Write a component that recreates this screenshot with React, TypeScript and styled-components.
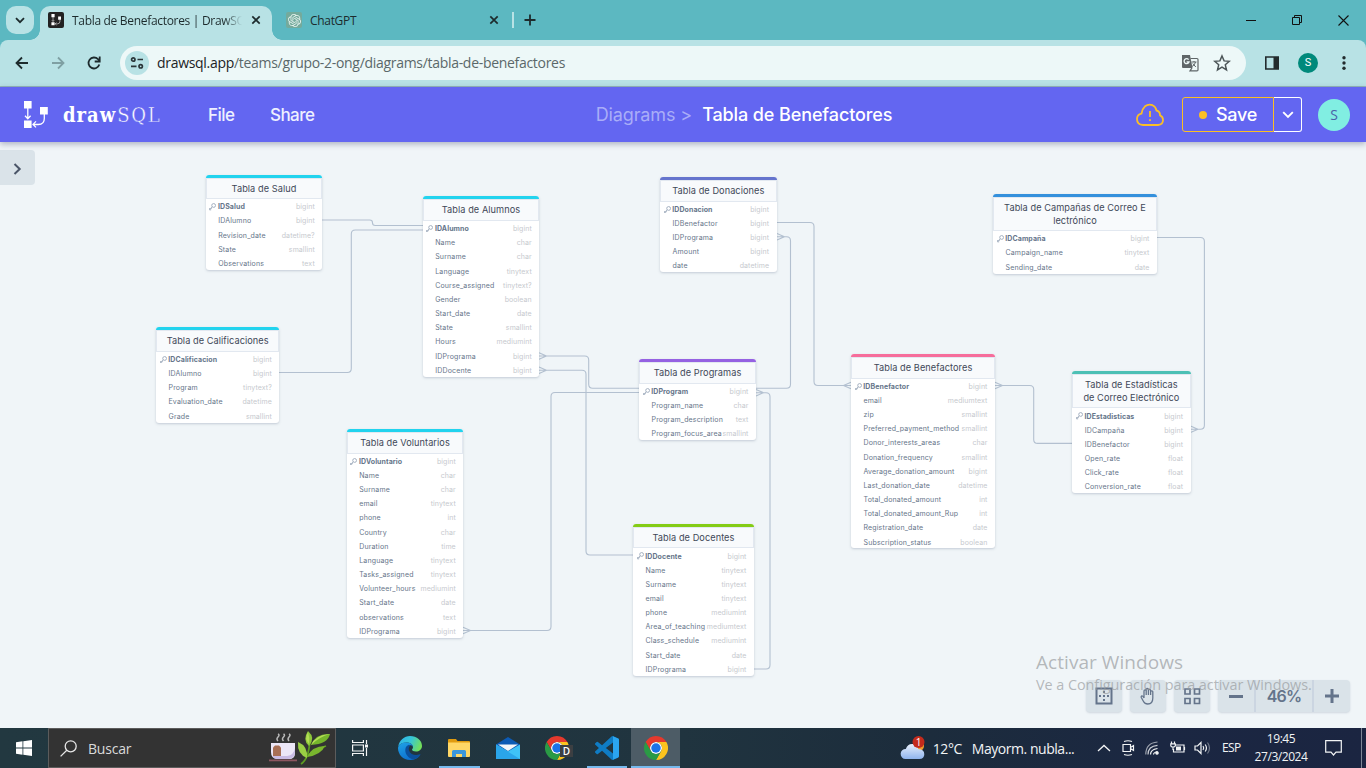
import React from "react";
import styled, { createGlobalStyle } from "styled-components";
import { SiOpenai } from "react-icons/si";

const UI = `"Open Sans", "Noto Sans", sans-serif`;
const APP = `Inter, "Liberation Sans", sans-serif`;

const Global = createGlobalStyle`
  * { box-sizing: border-box; }
  body { margin: 0; overflow: hidden; font-family: ${APP}; }
  svg { display: block; flex: none; }
`;

const Screen = styled.div`
  width: 1366px;
  height: 768px;
  display: flex;
  flex-direction: column;
  overflow: hidden;
  background: #5cb8c1;
`;

/* ---------- browser chrome ---------- */

const TabStrip = styled.div`
  height: 40px;
  flex: none;
  display: flex;
  padding-left: 6px;
  font: 12px ${UI};
  color: #1d2b2d;
`;

const TabSearch = styled.div`
  width: 28px;
  height: 28px;
  margin: 6px 6px 0 0;
  border-radius: 10px;
  background: #b8e2e5;
  display: grid;
  place-items: center;
`;

const Tab = styled.div<{ $active?: boolean; $width: number }>`
  position: relative;
  width: ${(p) => p.$width}px;
  height: 34px;
  margin-top: 6px;
  padding: 0 11px 6px ${(p) => (p.$active ? 8 : 14)}px;
  display: flex;
  align-items: center;
  border-radius: 10px 10px 0 0;
  background: ${(p) => (p.$active ? "#b8e2e5" : "transparent")};
  &::before,
  &::after {
    content: "";
    display: ${(p) => (p.$active ? "block" : "none")};
    position: absolute;
    bottom: 0;
    width: 10px;
    height: 10px;
  }
  &::before {
    left: -10px;
    background: radial-gradient(circle at 0 0, transparent 9.5px, #b8e2e5 10px);
  }
  &::after {
    right: -10px;
    background: radial-gradient(circle at 100% 0, transparent 9.5px, #b8e2e5 10px);
  }
`;

const TabTitle = styled.span<{ $fade?: boolean }>`
  flex: 1;
  margin: 0 9px 0 8px;
  overflow: hidden;
  white-space: nowrap;
  letter-spacing: -0.31px;
  mask-image: ${(p) =>
    p.$fade ? "linear-gradient(90deg, #000 calc(100% - 18px), transparent)" : "none"};
`;

const Favicon = styled.span<{ $bg: string }>`
  width: 16px;
  height: 16px;
  border-radius: 2px;
  background: ${(p) => p.$bg};
  display: grid;
  place-items: center;
  color: #e6f2ee;
`;

const StripDivider = styled.span`
  width: 2px;
  height: 16px;
  margin: 12px 10px 0 2px;
  background: #b8e2e5;
`;

const PlusSlot = styled.span`
  padding-top: 14px;
`;

const WindowButtons = styled.div`
  margin-left: auto;
  display: flex;
  div {
    width: 46px;
    height: 40px;
    display: grid;
    place-items: center;
  }
`;

const Toolbar = styled.div`
  height: 47px;
  flex: none;
  display: flex;
  align-items: center;
  padding: 0 14px 1px 14px;
  background: #b8e2e5;
  border-bottom: 1px solid #93b7ba;
  border-radius: 8px 8px 0 0;
`;

const NavIcons = styled.div`
  display: flex;
  gap: 20px;
  margin-right: 18px;
`;

const Omnibox = styled.div`
  width: 1126px;
  height: 34px;
  border-radius: 17px;
  background: #edf8f8;
  display: flex;
  align-items: center;
  padding: 0 15px 0 5px;
  font: 14px ${UI};
  letter-spacing: -0.3px;
  color: #5b686a;
  b {
    font-weight: 400;
    color: #1b2325;
  }
`;

const SiteInfo = styled.span`
  width: 24px;
  height: 24px;
  margin-right: 8px;
  border-radius: 50%;
  background: #b8e2e5;
  display: grid;
  place-items: center;
`;

const OmniIcons = styled.span`
  margin-left: auto;
  display: flex;
  align-items: center;
  gap: 14px;
`;

const ToolbarEnd = styled.div`
  display: flex;
  align-items: center;
  margin-left: 18px;
  gap: 18px;
`;

const Profile = styled.span`
  width: 20px;
  height: 20px;
  border-radius: 50%;
  background: #00897b;
  color: #fff;
  font: 11px/20px Roboto, sans-serif;
  text-align: center;
`;

/* ---------- application header ---------- */

const AppHeader = styled.header`
  position: relative;
  z-index: 2;
  height: 55px;
  flex: none;
  display: flex;
  align-items: center;
  padding: 0 16px 0 23px;
  background: #6366f1;
  color: #fff;
  font-size: 18px;
  box-shadow: 0 2px 6px rgba(40, 50, 90, 0.35);
`;

const Brand = styled.div`
  display: flex;
  align-items: center;
  width: 185px;
  gap: 15px;
`;

const Wordmark = styled.div`
  display: flex;
  gap: 1px;
  padding-top: 1px;
  font: 20px/24px "DejaVu Serif Condensed", "DejaVu Serif", serif;
  b {
    letter-spacing: 1px;
  }
  span {
    letter-spacing: 1.7px;
    -webkit-text-stroke: 0.4px #6366f1;
  }
`;

const MenuItem = styled.span`
  width: 62px;
  font-size: 17px;
  font-weight: 500;
  letter-spacing: -0.55px;
  padding-top: 1px;
  color: #eef0ff;
`;

const Crumbs = styled.div`
  flex: 1;
  text-align: center;
  white-space: pre;
  padding-left: 20px;
  font-weight: 500;
  letter-spacing: -0.11px;
  i {
    font-style: normal;
    font-weight: 400;
    color: #a9adf8;
    margin-right: 10px;
  }
`;

const SaveGroup = styled.div`
  display: flex;
  height: 35px;
  margin: 0 16px 0 18px;
`;

const SaveButton = styled.div`
  width: 92px;
  padding: 0 16px 1px;
  display: flex;
  align-items: center;
  justify-content: space-between;
  border: 1px solid #fbbf24;
  border-radius: 3px 0 0 3px;
  font-weight: 500;
  font-size: 18px;
  letter-spacing: -0.3px;
  &::before {
    content: "";
    width: 8px;
    height: 8px;
    margin-top: 2px;
    border-radius: 50%;
    background: #fbbf24;
  }
`;

const SaveMore = styled.div`
  width: 28px;
  border: 1px solid #fff;
  border-left: 0;
  border-radius: 0 3px 3px 0;
  display: grid;
  place-items: center;
`;

const Avatar = styled.div`
  width: 32px;
  height: 32px;
  border-radius: 50%;
  background: #81eee2;
  color: #4a62a8;
  font: 14px/32px ${UI};
  text-align: center;
`;

/* ---------- diagram ---------- */

const Canvas = styled.main`
  position: relative;
  flex: 1;
  background: #f0f5f8;
`;

const Links = styled.svg`
  position: absolute;
  inset: 0;
  fill: none;
  stroke: #b3c0d0;
  stroke-width: 1.1;
`;

const PanelToggle = styled.div`
  position: absolute;
  left: 0;
  top: 8px;
  width: 35px;
  height: 35px;
  border-radius: 0 4px 4px 0;
  background: #dae3e9;
  display: grid;
  place-items: center;
  padding-top: 3px;
`;

const TableCard = styled.section<{ $x: number; $y: number; $w: number }>`
  position: absolute;
  left: ${(p) => p.$x}px;
  top: ${(p) => p.$y - 142}px;
  width: ${(p) => p.$w}px;
  border-radius: 3px;
  background: #fff;
  box-shadow: 0 1px 2.5px rgba(60, 80, 110, 0.25);
`;

const TableHead = styled.h2<{ $color: string }>`
  margin: 0;
  padding: 4.1px 9px 4.5px;
  border-top: 3.3px solid ${(p) => p.$color};
  border-radius: 3px 3px 0 0;
  background: #f8fafc;
  box-shadow: inset 0 0 0 1px #e2e8f0;
  color: #3f4858;
  font-size: 9.2px;
  line-height: 13px;
  font-weight: 400;
  letter-spacing: 0.06px;
  text-align: center;
  white-space: pre-line;
`;

const Column = styled.div<{ $key?: boolean }>`
  height: 14.17px;
  display: flex;
  align-items: center;
  padding: 1.3px 7.5px 0 3.5px;
  font-size: 7px;
  line-height: 13px;
  letter-spacing: ${(p) => (p.$key ? 0.08 : 0.16)}px;
  white-space: nowrap;
  color: #66758a;
  font-weight: ${(p) => (p.$key ? 700 : 400)};
  svg {
    margin-right: 1.8px;
  }
`;

const ColumnName = styled.span<{ $key?: boolean }>`
  flex: 1;
  margin-left: ${(p) => (p.$key ? 0 : 9)}px;
`;

const ColumnType = styled.span`
  font-weight: 400;
  letter-spacing: 0.08px;
  color: #c6c9ce;
`;

const Controls = styled.div`
  position: absolute;
  right: 16px;
  bottom: 16px;
  display: flex;
  gap: 8px;
`;

const ControlBox = styled.div`
  height: 32px;
  display: flex;
  border-radius: 4px;
  background: #dae3e9;
  box-shadow: 0 1px 2px rgba(60, 80, 110, 0.18);
  color: #64748b;
  font: 600 16px/32px ${APP};
  letter-spacing: -0.8px;
`;

const ControlCell = styled.div<{ $w: number; $line?: boolean }>`
  width: ${(p) => p.$w}px;
  display: grid;
  place-items: center;
  border-right: ${(p) => (p.$line ? "2px solid #cbd5e1" : "0")};
`;

const Watermark = styled.div`
  position: absolute;
  left: 1036px;
  top: 507px;
  font-family: ${UI};
  color: rgba(150, 153, 156, 0.68);
  white-space: nowrap;
  div {
    font-size: 19px;
    line-height: 26px;
    letter-spacing: 0.05px;
  }
  p {
    margin: 0;
    font-size: 14.4px;
    line-height: 20px;
    letter-spacing: -0.04px;
  }
`;

/* ---------- taskbar ---------- */

const Taskbar = styled.footer`
  height: 40px;
  flex: none;
  display: flex;
  background: linear-gradient(90deg, #223840 0%, #20343f 50%, #1c2c3c 68%, #1b2742 85%, #1b2541 100%);
  color: #f2f4f5;
  font: 14px ${UI};
  letter-spacing: -0.2px;
`;

const StartSlot = styled.div`
  width: 48px;
  display: grid;
  place-items: center;
`;

const SearchBox = styled.div`
  width: 288px;
  border: 1px solid #5c5c5c;
  background: #333;
  display: flex;
  align-items: center;
  padding: 0 4px 0 11px;
  color: #dadada;
  span {
    flex: 1;
    margin-left: 11px;
  }
`;

const TaskSlot = styled.div<{ $open?: boolean; $active?: boolean }>`
  width: 49.2px;
  height: 40px;
  display: grid;
  place-items: center;
  position: relative;
  background: ${(p) => (p.$active ? "#4d5c66" : "transparent")};
  &::after {
    content: "";
    position: absolute;
    bottom: 0;
    left: ${(p) => (p.$active ? 0 : 5)}px;
    right: ${(p) => (p.$active ? 0 : 4)}px;
    height: 2px;
    background: ${(p) => (p.$open ? "#76b9ed" : "transparent")};
  }
`;

const Weather = styled.div`
  display: flex;
  align-items: center;
  margin-left: auto;
  width: 197px;
  gap: 8px;
  letter-spacing: -0.46px;
  span + span {
    margin-left: 2px;
  }
`;

const Tray = styled.div`
  display: flex;
  align-items: center;
  gap: 8.3px;
`;

const Lang = styled.span`
  width: 20px;
  margin: 0 12px 0 11px;
  font-size: 12px;
  line-height: 40px;
  letter-spacing: -0.6px;
`;

const Clock = styled.div`
  width: 54px;
  padding-top: 2px;
  font-size: 12px;
  line-height: 18px;
  letter-spacing: -0.45px;
  text-align: center;
`;

const NoticeSlot = styled.div`
  margin: 0 19px 0 17px;
  display: grid;
  place-items: center;
`;

const DesktopEdge = styled.div`
  width: 5px;
  border-left: 1px solid #7d8796;
`;

/* ---------- icons ---------- */

const Cross = () => (
  <svg width="10" height="10" viewBox="0 0 10 10" stroke="#1d2b2d" strokeWidth="1.7">
    <path d="M1.3 1.3 8.7 8.7M8.7 1.3 1.3 8.7" />
  </svg>
);

const SchemaMark = ({ size }: { size: number }) => (
  <svg width={size} height={size * 1.08} viewBox="0 0 25 27" fill="none" stroke="#fff" strokeWidth="1.3">
    <path fill="#fff" stroke="none" d="M1 0h7.6v7.6H1zM17 6h7.8v7.6H17zM1 19.4h7.6V27H1z" />
    <path d="M4.8 7v10.5M2 14.8l2.8 2.9 2.8-2.9M21.3 13v4.5q0 6-6 6h-5M13 20.4l-3 3 3 3" />
  </svg>
);

const KeyIcon = () => (
  <svg width="7" height="7.5" viewBox="0 1 13.6 14" fill="none" stroke="#a3afbf" strokeWidth="1.9">
    <circle cx="9" cy="5.5" r="3.7" />
    <path d="M6.5 8.2 1.3 13.4M1.2 10.6v3.4h3M4.5 9.8v2.2" />
  </svg>
);

const ChromeLogo = () => (
  <svg width="24" height="24" viewBox="0 0 48 48">
    <circle cx="24" cy="24" r="12" fill="#fff" />
    <path fill="#e5392d" d="M24,12H44.7812a23.9939,23.9939,0,0,0-41.5639.0029L13.6079,30l.0093-.0024A11.9852,11.9852,0,0,1,24,12Z" />
    <path fill="#fcc31e" d="M34.3913,30.0029,24.0007,48A23.994,23.994,0,0,0,44.78,12.0031H23.9989l-.0025.0093A11.985,11.985,0,0,1,34.3913,30.0029Z" />
    <path fill="#2a9a45" d="M13.6086,30.0031,3.218,12.006A23.994,23.994,0,0,0,24.0025,48L34.3931,30.0029l-.0067-.0068a11.9852,11.9852,0,0,1-20.7778.007Z" />
    <circle cx="24" cy="24" r="9.5" fill="#1a73e8" />
  </svg>
);

const ProfileTag = styled.span`
  position: absolute;
  left: 27px;
  top: 17px;
  width: 13px;
  height: 12px;
  background: #3c3f42;
  color: #fff;
  font: 600 10px/12px ${UI};
  text-align: center;
`;

const EdgeLogo = () => (
  <svg width="24" height="24" viewBox="0 0 24 24">
    <defs>
      <linearGradient id="eg1" x1="0" y1="0.2" x2="1" y2="0.5">
        <stop offset="0" stopColor="#2fb4ea" />
        <stop offset="0.5" stopColor="#36c6d8" />
        <stop offset="1" stopColor="#74e05a" />
      </linearGradient>
      <linearGradient id="eg2" x1="0" y1="0" x2="0.5" y2="1">
        <stop offset="0" stopColor="#1fa2e6" />
        <stop offset="1" stopColor="#0d6fce" />
      </linearGradient>
    </defs>
    <path fill="url(#eg1)" d="M0.3 10.5C1.2 4.3 6.3 0 12 0C19 0 24 4.5 24 10C24 13.5 21 15.5 18 15.5C15.5 15.5 14 14.6 14 13.8C14 13.2 15 12.6 15 11C15 8.5 12 6.5 8.5 6.5C5 6.5 1.5 8 0.3 10.5Z" />
    <path fill="url(#eg2)" d="M0 12C0.5 8.5 4 6.5 8.5 6.5C12 6.5 15 8.5 15 11C14.5 9.5 12.5 9 11.5 9.5C9 10.5 8.5 13 9 15C10 19.5 14 21 18 20.5L22 19.3C20 22.3 16.5 24 12 24C5 24 0 18.5 0 12Z" />
    <path fill="#0b4f9c" d="M11 8.8C8 10 7.2 12 7.3 14.5C7.5 19 11 22.6 15.5 23.4C18.5 22.6 20.8 21 22.3 19C22.7 18.4 22.2 18 21.7 18.3C18 20 12.5 19 11 14.5C10.4 12.5 11 10.8 12 9.8Z" />
  </svg>
);

const FolderLogo = () => (
  <svg width="22" height="19" viewBox="0 0 22 19">
    <path fill="#e09b0f" d="M0 1q0-1 1-1h7l1.5 2H21q1 0 1 1v3H0z" />
    <path fill="#ffd766" d="M0 3.5h22V17q0 1-1 1H1q-1 0-1-1z" />
    <path fill="#3b97dc" d="M4 18v-5.5Q4 11 5.5 11h11q1.5 0 1.5 1.5V18h-4v-3H8v3z" />
  </svg>
);

const MailLogo = () => (
  <svg width="24" height="22" viewBox="0 0 24 22">
    <path fill="#0c5bb5" d="M0 7.5 12 0l12 7.5V22H0z" />
    <path fill="#3fc3f7" d="M24 7.5V22H0V7.5l12 7z" />
    <path fill="#2aa5ea" d="M0 7.5 24 22H0z" />
    <path fill="#f3f6f9" d="M2 7.5h20L12 14z" />
  </svg>
);

const CodeLogo = () => (
  <svg width="24" height="24" viewBox="0 0 24 24">
    <path fill="#0f7cc4" d="M23.15 2.587L18.21.21a1.494 1.494 0 0 0-1.705.29l-9.46 8.63-4.12-3.128a.999.999 0 0 0-1.276.057L.327 7.261A1 1 0 0 0 .326 8.74L3.899 12 .326 15.26a1 1 0 0 0 .001 1.479L1.65 17.94a.999.999 0 0 0 1.276.057l4.12-3.128 9.46 8.63a1.492 1.492 0 0 0 1.704.29l4.942-2.377A1.5 1.5 0 0 0 24 20.06V3.939a1.5 1.5 0 0 0-.85-1.352zm-5.146 14.861L10.826 12l7.178-5.448v10.896z" />
    <path fill="#2ba5f0" d="M18 .15l5.15 2.437A1.5 1.5 0 0 1 24 3.94v16.12a1.5 1.5 0 0 1-.85 1.353L18 23.85z" />
  </svg>
);

const TeaCup = () => (
  <svg width="28" height="30" viewBox="0 0 28 30" fill="none">
    <g stroke="#b9b9b9" strokeWidth="1.5">
      <path d="M9 8q-2-2 0-4t0-3M14.5 8q-2-2 0-4t0-3M20 8q-2-2 0-4t0-3" />
    </g>
    <path fill="#ece6f7" d="M2 10h24v10q0 6-6 6H8.5Q2 26 2 19z" />
    <path fill="#c9bbe4" d="M19 26q7 0 7-7v-4q-1 7-8 8H3.5q1.5 3 5 3z" />
    <path fill="#a86f55" d="M4 14.5l2-2h4l2 2V23H4z" />
    <path fill="#8d5660" d="M0 26.5h28v1.8H0z" />
  </svg>
);

const LeafSprig = () => (
  <svg width="34" height="34" viewBox="0 0 34 34">
    <path d="M4 33Q12 28 13 8M9 26q8-7 20-11" fill="none" stroke="#5d9c22" strokeWidth="1.8" />
    <path fill="#8cc63a" d="M11 0q8 7 1 15-7-6-1-15Z" />
    <path fill="#75b52c" d="M33 3q-2 10-19 11Q19 2 33 3Z" />
    <path fill="#9ad044" d="M1 11q10 4 9 16-10-4-9-16Z" />
    <path fill="#7ab52e" d="M28 15q-4 9-18 11 5-11 18-11Z" />
    <path fill="#b3dd55" d="M33 3Q22 6 14 14 18 4 33 3ZM11 1q2 6 1 12-5-5-1-12Z" />
  </svg>
);

/* ---------- data ---------- */

type TableDef = { title: string; x: number; y: number; w: number; color: string; cols: string };

const CYAN = "#22d3ee";

const tables: TableDef[] = [
  { title: "Tabla de Salud", x: 205.7, y: 174.5, w: 116.6, color: CYAN,
    cols: "IDSalud bigint,IDAlumno bigint,Revision_date datetime?,State smallint,Observations text" },
  { title: "Tabla de Calificaciones", x: 156, y: 327.2, w: 123.3, color: CYAN,
    cols: "IDCalificacion bigint,IDAlumno bigint,Program tinytext?,Evaluation_date datetime,Grade smallint" },
  { title: "Tabla de Alumnos", x: 422.7, y: 196.3, w: 116.6, color: CYAN,
    cols: "IDAlumno bigint,Name char,Surname char,Language tinytext,Course_assigned tinytext?,Gender boolean,Start_date date,State smallint,Hours mediumint,IDPrograma bigint,IDDocente bigint" },
  { title: "Tabla de Voluntarios", x: 346.7, y: 429, w: 116.6, color: CYAN,
    cols: "IDVoluntario bigint,Name char,Surname char,email tinytext,phone int,Country char,Duration time,Language tinytext,Tasks_assigned tinytext,Volunteer_hours mediumint,Start_date date,observations text,IDPrograma bigint" },
  { title: "Tabla de Donaciones", x: 660, y: 177, w: 116.6, color: "#6574cd",
    cols: "IDDonacion bigint,IDBenefactor bigint,IDPrograma bigint,Amount bigint,date datetime" },
  { title: "Tabla de Programas", x: 639, y: 359.2, w: 117, color: "#9561e2",
    cols: "IDProgram bigint,Program_name char,Program_description text,Program_focus_area smallint" },
  { title: "Tabla de Docentes", x: 633, y: 523.7, w: 121, color: "#84cc16",
    cols: "IDDocente bigint,Name tinytext,Surname tinytext,email tinytext,phone mediumint,Area_of_teaching mediumtext,Class_schedule mediumint,Start_date date,IDPrograma bigint" },
  { title: "Tabla de Benefactores", x: 851, y: 354, w: 144, color: "#f66d9b",
    cols: "IDBenefactor bigint,email mediumtext,zip smallint,Preferred_payment_method smallint,Donor_interests_areas char,Donation_frequency smallint,Average_donation_amount bigint,Last_donation_date datetime,Total_donated_amount int,Total_donated_amount_Rup int,Registration_date date,Subscription_status boolean" },
  { title: "Tabla de Campañas de Correo E\nlectrónico", x: 993, y: 193.5, w: 164, color: "#3490dc",
    cols: "IDCampaña bigint,Campaign_name tinytext,Sending_date date" },
  { title: "Tabla de Estadísticas\nde Correo Electrónico", x: 1072.2, y: 370.8, w: 118.4, color: "#4dc0b5",
    cols: "IDEstadisticas bigint,IDCampaña bigint,IDBenefactor bigint,Open_rate float,Click_rate float,Conversion_rate float" },
];

type Link = { from: [number, number]; mid: number; to: [number, number]; feet: [number, number, number][] };

const links: Link[] = [
  { from: [322, 220], mid: 372.5, to: [423, 225.5], feet: [] },
  { from: [279, 372.5], mid: 351.3, to: [423, 230], feet: [] },
  { from: [539, 356], mid: 588.7, to: [639, 388.3], feet: [[539, 356, 1]] },
  { from: [639, 392.5], mid: 551, to: [463, 630.5], feet: [[463, 630.5, 1]] },
  { from: [539, 370.2], mid: 586, to: [633, 555], feet: [[539, 370.2, 1]] },
  { from: [777, 222.5], mid: 814, to: [851, 385.5], feet: [[851, 385.5, -1]] },
  { from: [777, 236.7], mid: 790.5, to: [756, 388.3], feet: [[777, 236.7, 1]] },
  { from: [756, 392.7], mid: 770, to: [754, 669], feet: [[756, 392.7, 1]] },
  { from: [1157, 237.5], mid: 1204.4, to: [1190, 429.2], feet: [[1190.5, 429.2, 1]] },
  { from: [995, 385.5], mid: 1033.7, to: [1072, 443.4], feet: [[995, 385.5, 1]] },
];

const elbow = ({ from: [x1, y1], mid, to: [x2, y2] }: Link) => {
  const r = Math.min(4, Math.abs(y2 - y1) / 2);
  const a = Math.sign(mid - x1) * r;
  const v = Math.sign(y2 - y1) * r;
  const b = Math.sign(x2 - mid) * r;
  return `M${x1} ${y1}H${mid - a}Q${mid} ${y1} ${mid} ${y1 + v}V${y2 - v}Q${mid} ${y2} ${mid + b} ${y2}H${x2}`;
};

const foot = ([x, y, d]: [number, number, number]) =>
  `M${x} ${y - 3.3}L${x + 7.5 * d} ${y}L${x} ${y + 3.3}`;

const DiagramTable = ({ title, x, y, w, color, cols }: TableDef) => (
  <TableCard $x={x} $y={y} $w={w}>
    <TableHead $color={color}>{title}</TableHead>
    {cols.split(",").map((col, i) => {
      const [name, type] = col.split(" ");
      return (
        <Column key={name} $key={i === 0}>
          {i === 0 && <KeyIcon />}
          <ColumnName $key={i === 0}>{name}</ColumnName>
          <ColumnType>{type}</ColumnType>
        </Column>
      );
    })}
  </TableCard>
);

/* ---------- sections ---------- */

const Browser = () => (
  <>
    <TabStrip>
      <TabSearch>
        <svg width="10" height="7" viewBox="0 0 10 7" fill="none" stroke="#1d2b2d" strokeWidth="1.8">
          <path d="M1 1.2 5 5.2 9 1.2" />
        </svg>
      </TabSearch>
      <Tab $active $width={232}>
        <Favicon $bg="#222"><SchemaMark size={10.5} /></Favicon>
        <TabTitle $fade>Tabla de Benefactores | DrawSQL</TabTitle>
        <Cross />
      </Tab>
      <Tab $width={238}>
        <Favicon $bg="#74aa9c"><SiOpenai size={13} /></Favicon>
        <TabTitle>ChatGPT</TabTitle>
        <Cross />
      </Tab>
      <StripDivider />
      <PlusSlot>
        <svg width="12" height="12" viewBox="0 0 12 12" stroke="#1d2b2d" strokeWidth="1.8">
          <path d="M6 .5v11M.5 6h11" />
        </svg>
      </PlusSlot>
      <WindowButtons>
        <div><svg width="10" height="10" viewBox="0 0 10 10"><path d="M0 5.5h10" stroke="#111" /></svg></div>
        <div>
          <svg width="10" height="10" viewBox="0 0 10 10" fill="none" stroke="#111">
            <path d="M.5 2.5h7v7h-7zM2.5 2.5v-2h7v7h-2" />
          </svg>
        </div>
        <div><svg width="11" height="11" viewBox="0 0 11 11" stroke="#111" strokeWidth="1.1"><path d="M.5.5l10 10M10.5.5l-10 10" /></svg></div>
      </WindowButtons>
    </TabStrip>
    <Toolbar>
      <NavIcons>
        <svg width="16" height="16" viewBox="0 0 16 16" fill="none" stroke="#1d2b2d" strokeWidth="1.8"><path d="M14 8H3M8 2.5 2.5 8 8 13.5" /></svg>
        <svg width="16" height="16" viewBox="0 0 16 16" fill="none" stroke="#7fa0a3" strokeWidth="1.8"><path d="M2 8h11M8 2.5 13.5 8 8 13.5" /></svg>
        <svg width="16" height="16" viewBox="0 0 16 16" fill="none" stroke="#1d2b2d" strokeWidth="1.8">
          <path d="M13.3 9.5A5.5 5.5 0 1 1 12 4.2L13.5 5.8" />
          <path d="M13.7 1.5v5h-5" />
        </svg>
      </NavIcons>
      <Omnibox>
        <SiteInfo>
          <svg width="14" height="14" viewBox="0 0 14 14" fill="none" stroke="#2b3639" strokeWidth="1.7">
            <circle cx="3.3" cy="3.5" r="1.7" /><path d="M7.5 3.5H13M1 10.3h5.5" /><circle cx="10.7" cy="10.3" r="1.7" />
          </svg>
        </SiteInfo>
        <span><b>drawsql.app</b>/teams/grupo-2-ong/diagrams/tabla-de-benefactores</span>
        <OmniIcons>
          <svg width="18" height="18" viewBox="0 0 18 18">
            <path fill="#5f6668" d="M1 1h8l2.5 13H2q-1 0-1-1z" />
            <path fill="none" stroke="#5f6668" strokeWidth="1.2" d="M9.5 4.5H16q1 0 1 1V16q0 .8-1 .8H9l2-3" />
            <path fill="none" stroke="#edf8f8" strokeWidth="1.3" d="M7.6 5.6A2.5 2.5 0 1 0 8 8H5.6" />
            <path fill="none" stroke="#5f6668" strokeWidth="1" d="M10.5 8h5M13 7v1M14.5 8q-.5 3-3.5 4.5M11.8 9.5l3 3.5" />
          </svg>
          <svg width="18" height="18" viewBox="0 0 18 18" fill="none" stroke="#4c5558" strokeWidth="1.5">
            <path d="M9 2l2.1 4.9 5.2.4-4 3.5 1.2 5.2L9 13.2 4.5 16l1.2-5.2-4-3.5 5.2-.4z" />
          </svg>
        </OmniIcons>
      </Omnibox>
      <ToolbarEnd>
        <svg width="16" height="16" viewBox="0 0 16 16"><path fill="none" stroke="#222b2d" strokeWidth="1.6" d="M1.8 2h12.4v12H1.8z" /><path fill="#222b2d" d="M9.5 2H14v12H9.5z" /></svg>
        <Profile>S</Profile>
        <svg width="16" height="16" viewBox="0 0 16 16" fill="#222b2d"><circle cx="8" cy="2.8" r="1.7" /><circle cx="8" cy="8" r="1.7" /><circle cx="8" cy="13.2" r="1.7" /></svg>
      </ToolbarEnd>
    </Toolbar>
  </>
);

const Header = () => (
  <AppHeader>
    <Brand>
      <SchemaMark size={25} />
      <Wordmark><b>draw</b><span>SQL</span></Wordmark>
    </Brand>
    <MenuItem>File</MenuItem>
    <MenuItem>Share</MenuItem>
    <Crumbs><i>Diagrams &gt;</i>Tabla de Benefactores</Crumbs>
    <svg width="28" height="24" viewBox="0 0 28 24" fill="none" stroke="#fbbf24" strokeWidth="1.8">
      <path d="M7 22q-6-.4-6-6 0-4.6 4.5-5.4Q6 6 9 3.3 12.5.5 16.5 2.2q3.3 1.5 4 5.3 3.5.8 3.6 4.8 2.9 1.2 2.9 4.7 0 4.6-5 5z" />
      <path d="M14 8v6M14 16.2v1.8" />
    </svg>
    <SaveGroup>
      <SaveButton>Save</SaveButton>
      <SaveMore>
        <svg width="12" height="8" viewBox="0 0 12 8" fill="none" stroke="#fff" strokeWidth="1.9"><path d="M1.2 1.2 6 6l4.8-4.8" /></svg>
      </SaveMore>
    </SaveGroup>
    <Avatar>S</Avatar>
  </AppHeader>
);

const Diagram = () => (
  <Canvas>
    <Links width="1366" height="586" viewBox="0 142 1366 586">
      {links.map((l) => <path key={l.from.join()} d={elbow(l) + l.feet.map(foot).join("")} />)}
    </Links>
    {tables.map((t) => <DiagramTable key={t.title} {...t} />)}
    <PanelToggle>
      <svg width="9" height="12" viewBox="0 0 9 12" fill="none" stroke="#4a5568" strokeWidth="2"><path d="M1.5 1 6.7 6 1.5 11" /></svg>
    </PanelToggle>
    <Controls>
      <ControlBox>
        <ControlCell $w={36}>
          <svg width="18" height="18" viewBox="0 0 18 18" stroke="#64748b" strokeWidth="2" fill="none">
            <path d="M1.5 1.5h15v15h-15z" /><path strokeDasharray="2 2" d="M9 4v10M4 9h10" />
          </svg>
        </ControlCell>
      </ControlBox>
      <ControlBox>
        <ControlCell $w={36}>
          <svg width="16" height="18" viewBox="0 0 16 18" fill="none" stroke="#64748b" strokeWidth="1.3">
            <path d="M4 11V4q0-1.2 1.1-1.2T6.2 4v4M6.2 5V2.5q0-1.2 1.1-1.2t1.1 1.2V8M8.4 3.5q0-1.2 1.1-1.2t1.1 1.2V8M10.6 5q0-1.2 1.1-1.2T12.8 5v6q0 6-5 6-3 0-4.3-2.5L1.3 10.5q-.4-1.3.7-1.6 1-.2 2 2.1" />
          </svg>
        </ControlCell>
      </ControlBox>
      <ControlBox>
        <ControlCell $w={36}>
          <svg width="18" height="18" viewBox="0 0 18 18" fill="none" stroke="#64748b" strokeWidth="1.7">
            <path d="M2 2h5v5H2zM11.5 2h5v5h-5zM2 11.5h5v5H2zM11.5 11.5h5v5h-5z" />
          </svg>
        </ControlCell>
      </ControlBox>
      <ControlBox>
        <ControlCell $w={38} $line><svg width="14" height="3"><path fill="#64748b" d="M0 0h14v3H0z" /></svg></ControlCell>
        <ControlCell $w={58} $line>46%</ControlCell>
        <ControlCell $w={36}><svg width="14" height="14"><path fill="#64748b" d="M0 5.5h5.5V0h3v5.5H14v3H8.5V14h-3V8.5H0z" /></svg></ControlCell>
      </ControlBox>
    </Controls>
    <Watermark>
      <div>Activar Windows</div>
      <p>Ve a Configuración para activar Windows.</p>
    </Watermark>
  </Canvas>
);

const WindowsTaskbar = () => (
  <Taskbar>
    <StartSlot>
      <svg width="16" height="16" viewBox="0 0 16 16" fill="#fff"><path d="M0 2.3 6.5 1.3V7.6H0zM7.3 1.2 16 0v7.6H7.3zM0 8.4h6.5v6.3L0 13.7zM7.3 8.4H16V16l-8.7-1.2z" /></svg>
    </StartSlot>
    <SearchBox>
      <svg width="17" height="17" viewBox="0 0 17 17" fill="none" stroke="#e6e6e6" strokeWidth="1.3"><circle cx="10.7" cy="6.3" r="5.5" /><path d="M6.8 10.2.6 16.4" /></svg>
      <span>Buscar</span>
      <TeaCup />
      <LeafSprig />
    </SearchBox>
    <TaskSlot>
      <svg width="17" height="16" viewBox="0 0 17 16" fill="none" stroke="#f2f4f5" strokeWidth="1.2">
        <path d="M.6 0v2.5h10.8V0M.6 16v-2.5h10.8V16M.6 5h10.8v6H.6zM14.5 0v4M14.5 8v8" /><path fill="#f2f4f5" stroke="none" d="M13 4.5h3V7.5h-3z" />
      </svg>
    </TaskSlot>
    <TaskSlot><EdgeLogo /></TaskSlot>
    <TaskSlot $open><FolderLogo /></TaskSlot>
    <TaskSlot><MailLogo /></TaskSlot>
    <TaskSlot><ChromeLogo /><ProfileTag>D</ProfileTag></TaskSlot>
    <TaskSlot $open><CodeLogo /></TaskSlot>
    <TaskSlot $open $active><ChromeLogo /></TaskSlot>
    <Weather>
      <svg width="25" height="24" viewBox="0 0 25 24">
        <defs><linearGradient id="cl" x1="0" y1="0" x2="0" y2="1"><stop offset="0" stopColor="#e9f0fb" /><stop offset="1" stopColor="#8fb4ee" /></linearGradient></defs>
        <circle cx="19" cy="10" r="5" fill="#f39a2b" />
        <path fill="url(#cl)" d="M5.5 23a5 5 0 0 1 .3-10q2-5.5 7-5 4.5.5 5.5 5 6 .3 6 5.2 0 4.8-5 4.8z" />
        <circle cx="18.5" cy="6" r="6" fill="#c42b1c" />
        <text x="18.5" y="9.5" fontSize="10" textAnchor="middle" fill="#fff" fontFamily="Open Sans">1</text>
      </svg>
      <span>12°C</span>
      <span>Mayorm. nubla...</span>
    </Weather>
    <Tray>
      <svg width="14" height="8" viewBox="0 0 14 8" fill="none" stroke="#f2f4f5" strokeWidth="1.3"><path d="M1 7l6-5.5L13 7" /></svg>
      <svg width="18" height="16" viewBox="0 0 18 16" fill="none" stroke="#f2f4f5" strokeWidth="1.2">
        <path d="M5 1.5q4-1.5 8 0M5 14.5q4 1.5 8 0M4 4.5h7.5v7H4zM11.5 7.5l3-2v5l-3-2" />
      </svg>
      <svg width="16" height="14" viewBox="0 0 16 14" fill="none" stroke="#f2f4f5" strokeWidth="1.2">
        <path d="M5.5 13.5q0-5 7-6" /><path d="M8.5 13.5q0-2 4-3" /><path opacity=".8" d="M3 13.5Q3 5 12.5 4.3" /><path opacity=".6" d="M.8 13.5Q.8 2 12.5 1" /><circle cx="12" cy="12" r="1.2" fill="#f2f4f5" />
      </svg>
      <svg width="16" height="14" viewBox="0 0 16 14" fill="none" stroke="#f2f4f5" strokeWidth="1.2">
        <path d="M5 4h9v7H3.5V8M14.5 6v3" /><path fill="#f2f4f5" stroke="none" d="M6 5.5h5v4H6z" /><path d="M1.5.5v2M4.5.5v2M.8 2.8h4.5v2Q5 6 3 6T.8 4.8zM3 6v3" />
      </svg>
      <svg width="17" height="14" viewBox="0 0 17 14" fill="none" stroke="#f2f4f5" strokeWidth="1.2">
        <path d="M1 5h2.5L7 1.5v11L3.5 9H1z" /><path d="M9 5q1.5 2 0 4M11.2 3.5q2.5 3.5 0 7" /><path opacity=".4" d="M13.5 1.5q4 5.5 0 11" />
      </svg>
    </Tray>
    <Lang>ESP</Lang>
    <Clock>19:45<br />27/3/2024</Clock>
    <NoticeSlot>
      <svg width="17" height="16" viewBox="0 0 17 16" fill="none" stroke="#f2f4f5" strokeWidth="1.2"><path d="M.7.7h15.6v11.5H11L8.5 15 6 12.2H.7z" /></svg>
    </NoticeSlot>
    <DesktopEdge />
  </Taskbar>
);

export default function App() {
  return (
    <>
      <Global />
      <Screen>
        <Browser />
        <Header />
        <Diagram />
        <WindowsTaskbar />
      </Screen>
    </>
  );
}
